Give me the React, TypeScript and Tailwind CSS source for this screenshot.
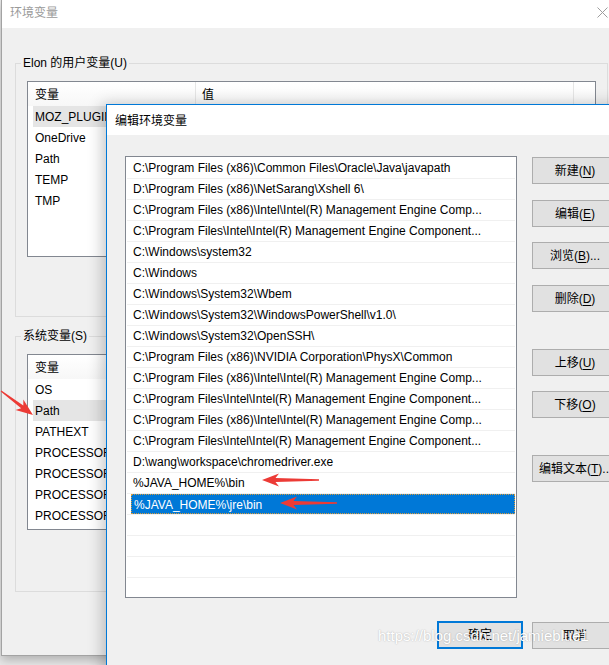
import React from "react";

const userVars = ["MOZ_PLUGIN_PATH", "OneDrive", "Path", "TEMP", "TMP"];
const sysVars = ["OS", "Path", "PATHEXT", "PROCESSOR_ARCHITECTURE", "PROCESSOR_IDENTIFIER", "PROCESSOR_LEVEL", "PROCESSOR_REVISION"];

const paths = [
    "C:\\Program Files (x86)\\Common Files\\Oracle\\Java\\javapath",
    "D:\\Program Files (x86)\\NetSarang\\Xshell 6\\",
    "C:\\Program Files (x86)\\Intel\\Intel(R) Management Engine Comp...",
    "C:\\Program Files\\Intel\\Intel(R) Management Engine Component...",
    "C:\\Windows\\system32",
    "C:\\Windows",
    "C:\\Windows\\System32\\Wbem",
    "C:\\Windows\\System32\\WindowsPowerShell\\v1.0\\",
    "C:\\Windows\\System32\\OpenSSH\\",
    "C:\\Program Files (x86)\\NVIDIA Corporation\\PhysX\\Common",
    "C:\\Program Files (x86)\\Intel\\Intel(R) Management Engine Comp...",
    "C:\\Program Files\\Intel\\Intel(R) Management Engine Component...",
    "C:\\Program Files (x86)\\Intel\\Intel(R) Management Engine Comp...",
    "C:\\Program Files\\Intel\\Intel(R) Management Engine Component...",
    "D:\\wang\\workspace\\chromedriver.exe",
    "%JAVA_HOME%\\bin",
    "%JAVA_HOME%\\jre\\bin",
    "",
    "",
    "",
    "",
];

const SELECTED = 16;

type VarListProps = {
    items: string[];
    highlight: number;
};

const VarList = ({ items, highlight }: VarListProps) => (
    <div className="h-[176px] overflow-hidden border border-[#828790] bg-white">
        <div className="flex h-[24px] bg-gradient-to-b from-white to-[#f7f7f7]">
            <div className="flex w-[168px] items-center border-r border-[#e5e5e5] pl-[7px] pt-[2px]">
                变量
            </div>
            <div className="flex w-[378px] items-center border-r border-[#e5e5e5] pl-[6px] pt-[2px]">
                值
            </div>
        </div>
        {items.map((name, i) => (
            <div
                key={name + i}
                className={`ml-[5px] h-[21px] whitespace-nowrap pl-[2px] pt-[2px] leading-[19px] ${
                    i === highlight ? "bg-[#e5e5e5]" : ""
                }`}
            >
                {name}
            </div>
        ))}
    </div>
);

const Legend = ({ children }: { children: React.ReactNode }) => (
    <legend className="ml-[5px] px-[2px] leading-[16px]">{children}</legend>
);

const Mnemonic = ({ label, k, tail = "" }: { label: string; k: string; tail?: string }) => (
    <span>
        {label}(<span className="underline underline-offset-2">{k}</span>){tail}
    </span>
);

const Btn = ({ children, className = "" }: { children: React.ReactNode; className?: string }) => (
    <div
        className={`flex h-[27px] w-[86px] items-center justify-center whitespace-nowrap border border-[#adadad] bg-[#e1e1e1] ${className}`}
    >
        {children}
    </div>
);

const RedArrow = ({ className }: { className: string }) => (
    <svg className={className} width="58" height="14" viewBox="0 0 58 14">
        <polygon
            points="0,7 17,0.5 13.5,5 57,6.2 57,7.8 13.5,9 17,13.5"
            fill="#ec3b36"
        />
    </svg>
);

export default function App() {
    return (
        <div className="relative h-[665px] w-[609px] overflow-hidden bg-[#e9e9e9] font-['Liberation_Sans','Noto_Sans_CJK_SC',sans-serif] text-[12px] text-black">
            {/* background window: 环境变量 */}
            <div className="absolute left-[1px] top-0 h-[656px] w-[612px] border-b border-l border-[#a3a3a3] bg-[#f0f0f0] shadow-[0_4px_10px_rgba(0,0,0,0.25)]">
                <div className="flex h-[28px] items-center justify-between bg-white pb-[2px] pl-[8px] pr-[5px]">
                    <span className="text-[#9a9a9a]">环境变量</span>
                    <svg width="11" height="11" viewBox="0 0 11 11" className="mb-[2px]">
                        <path d="M0.5 0.5 L10.5 10.5 M10.5 0.5 L0.5 10.5" stroke="#9d9d9d" strokeWidth="1" />
                    </svg>
                </div>
                <div className="pl-[13px] pr-[5px] pt-[27px]">
                    <fieldset className="border border-[#dcdcdc] pb-[59px]">
                        <Legend>Elon 的用户变量(U)</Legend>
                        <div className="mt-[10px] px-[11px]">
                            <VarList items={userVars} highlight={0} />
                        </div>
                    </fieldset>
                    <fieldset className="mt-[11px] border border-[#dcdcdc] pb-[61px]">
                        <Legend>系统变量(S)</Legend>
                        <div className="mt-[10px] px-[11px]">
                            <VarList items={sysVars} highlight={1} />
                        </div>
                    </fieldset>
                </div>
            </div>

            <svg className="absolute left-0 top-[380px]" width="40" height="40" viewBox="0 0 40 40">
                <g transform="translate(33,35) rotate(37)">
                    <polygon points="0,0 -17,-6.5 -13.5,-1.8 -40,-0.6 -40,0.6 -13.5,1.8 -17,6.5" fill="#ec3b36" />
                </g>
            </svg>

            {/* foreground dialog: 编辑环境变量 */}
            <div className="absolute left-[106px] top-[104px] h-[575px] w-[520px] border-l border-t border-[#0078d7] bg-[#f0f0f0] shadow-[-4px_0_14px_rgba(0,0,0,0.22)]">
                <div className="flex h-[30px] items-center bg-white pl-[8px] pt-[2px]">编辑环境变量</div>
                <div className="pl-[18px] pt-[21px]">
                    <div className="flex">
                        <div className="h-[442px] w-[392px] overflow-hidden border border-[#828790] bg-white px-[1px] pt-[1px]">
                            {paths.map((p, i) => (
                                <div key={i} className="h-[21px] border-b border-[#f0f0f0]">
                                    <div
                                        className={`ml-[4px] h-[20px] overflow-hidden whitespace-nowrap pl-[2px] pt-[1px] leading-[19px] ${
                                            i === SELECTED
                                                ? "border border-dotted border-[#d69a3c] bg-[#0078d7] pl-[1px] pt-0 leading-[18px] text-white"
                                                : ""
                                        }`}
                                    >
                                        {p}
                                    </div>
                                </div>
                            ))}
                        </div>
                        <div className="ml-[15px] flex flex-col pt-[1px]">
                            <Btn>
                                <Mnemonic label="新建" k="N" />
                            </Btn>
                            <Btn className="mt-[16px]">
                                <Mnemonic label="编辑" k="E" />
                            </Btn>
                            <Btn className="mt-[15px]">
                                <Mnemonic label="浏览" k="B" tail="..." />
                            </Btn>
                            <Btn className="mt-[16px]">
                                <Mnemonic label="删除" k="D" />
                            </Btn>
                            <Btn className="mt-[37px]">
                                <Mnemonic label="上移" k="U" />
                            </Btn>
                            <Btn className="mt-[15px]">
                                <Mnemonic label="下移" k="O" />
                            </Btn>
                            <Btn className="mt-[37px] justify-start pl-[6px]">
                                <Mnemonic label="编辑文本" k="T" tail="..." />
                            </Btn>
                        </div>
                    </div>
                    <div className="mt-[23px] flex w-[493px] justify-end gap-[9px]">
                        <div className="flex h-[28px] w-[86px] items-center justify-center border-2 border-[#0078d7] bg-[#e1e1e1]">
                            确定
                        </div>
                        <Btn className="mt-[1px] h-[26px]">取消</Btn>
                    </div>
                </div>
            </div>

            <RedArrow className="absolute left-[262px] top-[473px]" />
            <RedArrow className="absolute left-[280px] top-[496px]" />

            <div className="absolute left-[378px] top-[625px] font-['Liberation_Sans',sans-serif] text-[15px] text-white [text-shadow:0_0_1.5px_rgba(0,0,0,0.3)]">
                https://blog.csdn.net/jamieblue1
            </div>
        </div>
    );
}
